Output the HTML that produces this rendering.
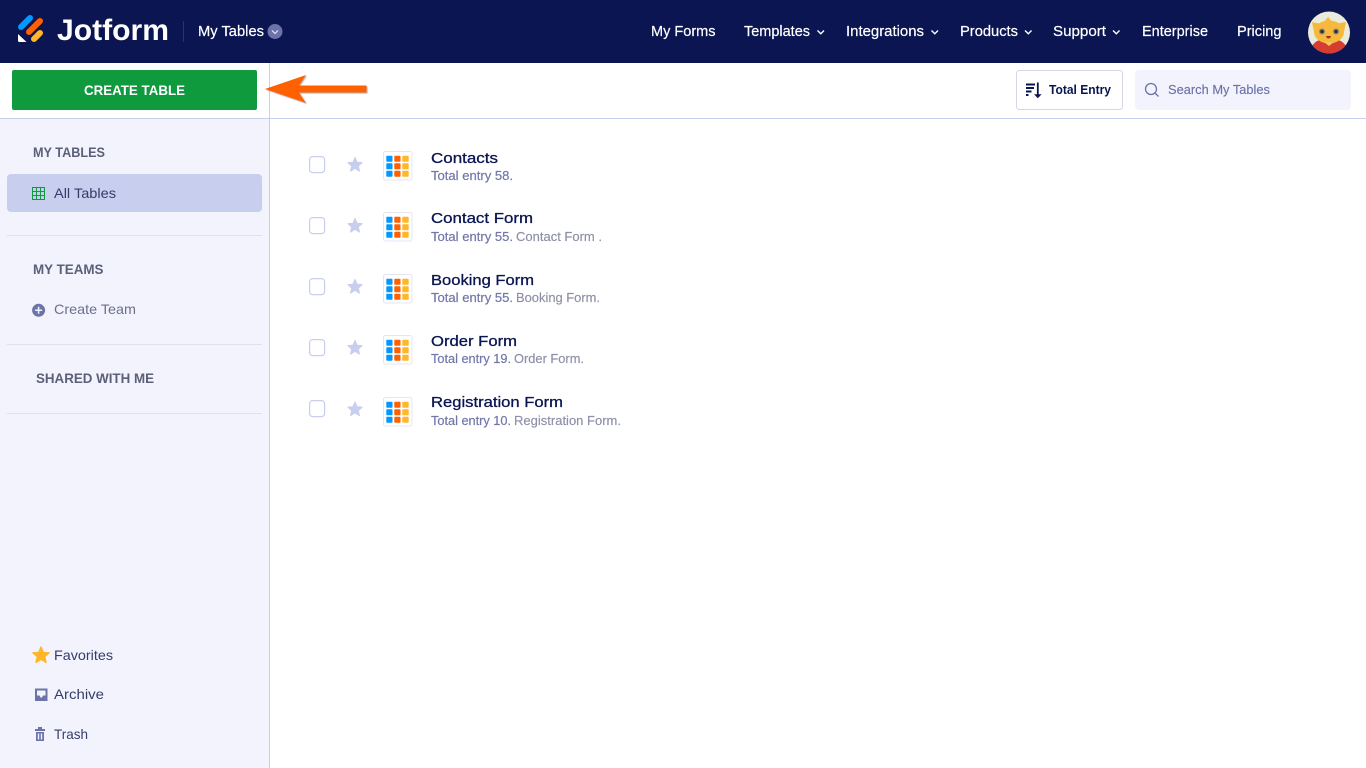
<!DOCTYPE html>
<html lang="en">
<head>
<meta charset="utf-8">
<title>Jotform Tables</title>
<style>
html,body{margin:0;padding:0;width:1366px;height:768px;overflow:hidden;background:#fff}
svg{display:block;position:absolute;left:0;top:0}
text{font-family:"Liberation Sans",sans-serif;white-space:pre}
.nav{fill:#fff;font-size:14.5px;stroke:#fff;stroke-width:.2}
.sec{fill:#5b6078;font-size:14px;font-weight:700}
.side{fill:#343c6a;font-size:14px}
.title{fill:#0a1551;font-size:15px;stroke:#0a1551;stroke-width:.3}
.sub1{fill:#7378aa;font-size:12.5px;stroke:#7378aa;stroke-width:.2}
.sub2{fill:#8d8fa8;font-size:12.5px;stroke:#8d8fa8;stroke-width:.15}
.chev{fill:none;stroke:#fff;stroke-width:1.4}
.cb{fill:#fff;stroke:#c8ceed;stroke-width:1.2}
.div{stroke:#dfe0ec;stroke-width:1}
.s{stroke-width:1.2;stroke-linejoin:round}
</style>
</head>
<body>
<svg width="1366" height="768" viewBox="0 0 1366 768" xmlns="http://www.w3.org/2000/svg">
<defs>
<g id="tbl">
<rect x=".5" y=".5" width="28.5" height="28.5" rx="2" fill="#fff" stroke="#e3e5f5"/>
<g fill="#0099ff"><rect x="3.3" y="4.7" width="6.2" height="6" rx=".8"/><rect x="3.3" y="12.3" width="6.2" height="6" rx=".8"/><rect x="3.3" y="19.7" width="6.2" height="6" rx=".8"/></g>
<g fill="#ff6100"><rect x="11.3" y="4.7" width="6.2" height="6" rx=".8"/><rect x="11.3" y="12.3" width="6.2" height="6" rx=".8"/><rect x="11.3" y="19.7" width="6.2" height="6" rx=".8"/></g>
<g fill="#ffb629"><rect x="19.3" y="4.7" width="6.4" height="6" rx=".8"/><rect x="19.3" y="12.3" width="6.4" height="6" rx=".8"/><rect x="19.3" y="19.7" width="6.4" height="6" rx=".8"/></g>
</g>
<path id="star" d="M0-7.4 2-2.7 7-2.300 3.200 1 4.400 6 0 3.300-4.400 6-3.200 1-7-2.300-2-2.700Z"/>
<filter id="sh" x="-10%" y="-20%" width="120%" height="140%"><feDropShadow dx="1" dy="1" stdDeviation=".6" flood-color="#777" flood-opacity=".6"/></filter>
<clipPath id="av"><circle cx="1329" cy="32.5" r="21"/></clipPath>
</defs>

<!-- sidebar / header backgrounds -->
<rect x="0" y="119" width="269" height="649" fill="#f3f3fe"/>
<rect x="269" y="63" width="1" height="705" fill="#c8ceed"/>
<rect x="0" y="118" width="1366" height="1" fill="#c8ceed"/>
<rect x="0" y="0" width="1366" height="63" fill="#0a1551"/>

<!-- logo -->
<g fill="none" stroke-linecap="round" stroke-width="6">
<path d="M21 27 30 18" stroke="#0099ff"/>
<path d="M29 32 40 21" stroke="#ff6100"/>
<path d="M34 39 40 33" stroke="#ffb629"/>
</g>
<path d="M18 34 26.500 42H19.500Q18 42 18 40.500Z" fill="#fff"/>
<text x="57" y="40" font-size="30" font-weight="700" fill="#fff" textLength="112" lengthAdjust="spacingAndGlyphs">Jotform</text>
<rect x="183" y="21" width="1" height="21" fill="#2a336b"/>
<text class="nav" x="198" y="36" textLength="66" lengthAdjust="spacingAndGlyphs">My Tables</text>
<circle cx="275" cy="31.500" r="7.500" fill="#6c73a8"/>
<path d="M272 30.500 275 33.500 278 30.500" fill="none" stroke="#e3e5f5" stroke-width="1.200"/>

<!-- nav -->
<text class="nav" x="651" y="36" textLength="64.500" lengthAdjust="spacingAndGlyphs">My Forms</text>
<text class="nav" x="744" y="36" textLength="66" lengthAdjust="spacingAndGlyphs">Templates</text>
<path class="chev" d="M817.500 30.500 820.800 33.800 824 30.500"/>
<text class="nav" x="846" y="36" textLength="78" lengthAdjust="spacingAndGlyphs">Integrations</text>
<path class="chev" d="M931.500 30.500 934.800 33.800 938 30.500"/>
<text class="nav" x="960" y="36" textLength="58" lengthAdjust="spacingAndGlyphs">Products</text>
<path class="chev" d="M1025 30.500 1028.300 33.800 1031.500 30.500"/>
<text class="nav" x="1053" y="36" textLength="53" lengthAdjust="spacingAndGlyphs">Support</text>
<path class="chev" d="M1113 30.500 1116.300 33.800 1119.500 30.500"/>
<text class="nav" x="1142" y="36" textLength="66" lengthAdjust="spacingAndGlyphs">Enterprise</text>
<text class="nav" x="1237" y="36" textLength="44.500" lengthAdjust="spacingAndGlyphs">Pricing</text>

<!-- avatar -->
<circle cx="1329" cy="32.500" r="21" fill="#e9ebdd"/>
<g clip-path="url(#av)">
<path d="M1309 56Q1311 42 1320 40H1338Q1347 42 1349 56Z" fill="#d63c30"/>
<path d="M1312 22 1322 24 1328 17 1334 24 1346 22 1344 32H1314Z" fill="#f6b93b"/>
<ellipse cx="1329" cy="32" rx="15" ry="11.500" fill="#f6b93b"/>
<path d="M1324 42 1329 46 1334 42Z" fill="#f7c65a"/>
</g>
<circle cx="1322" cy="31.500" r="3" fill="#8a8578"/><circle cx="1322" cy="31.500" r="1.800" fill="#33303e"/>
<circle cx="1336" cy="31.500" r="3" fill="#8a8578"/><circle cx="1336" cy="31.500" r="1.800" fill="#33303e"/>
<path d="M1326 36H1331Q1330.500 38.500 1328.500 38.500T1326 36Z" fill="#9b3224"/>

<!-- toolbar -->
<rect x="12" y="70" width="245" height="40" rx="2" fill="#0f9a3e"/>
<text x="84" y="95" font-size="14" font-weight="700" fill="#fff" textLength="101" lengthAdjust="spacingAndGlyphs">CREATE TABLE</text>
<path filter="url(#sh)" d="M265 89 306 75 299 85.500H366.500V92.500H299L306 103Z" fill="#ff6100"/>

<rect x="1016.500" y="70.500" width="106" height="39" rx="3" fill="#fff" stroke="#d5d6e8"/>
<g fill="#0a1551">
<rect x="1026" y="83.500" width="9" height="2"/><rect x="1026" y="87" width="8" height="2"/><rect x="1026" y="90.500" width="5.500" height="2"/><rect x="1026" y="94" width="2.500" height="2"/>
</g>
<path d="M1037.800 82.500V95" stroke="#0a1551" stroke-width="1.800" fill="none"/>
<path d="M1034 94.300H1041.600L1037.800 98.300Z" fill="#0a1551"/>
<text x="1049" y="94" font-size="12.500" font-weight="700" fill="#0a1551" textLength="62" lengthAdjust="spacingAndGlyphs">Total Entry</text>

<rect x="1135" y="70" width="216" height="40" rx="4" fill="#f3f3fe"/>
<circle cx="1151" cy="89" r="5.500" fill="none" stroke="#6c73a8" stroke-width="1.300"/>
<path d="M1155 93 1158.500 96.500" stroke="#6c73a8" stroke-width="1.300"/>
<text x="1168" y="94" font-size="13" fill="#6c73a8" stroke="#6c73a8" stroke-width=".15" textLength="102" lengthAdjust="spacingAndGlyphs">Search My Tables</text>

<!-- sidebar -->
<text class="sec" x="33" y="157" textLength="72" lengthAdjust="spacingAndGlyphs">MY TABLES</text>
<rect x="7" y="174" width="255" height="38" rx="4" fill="#c8ceed"/>
<g fill="none" stroke="#0f9a3e" stroke-width="1">
<rect x="32.500" y="187.500" width="12" height="12"/>
<path d="M32.500 191.500H44.500M32.500 195.500H44.500M36.500 187.500V199.500M40.500 187.500V199.500"/>
</g>
<text class="side" x="54" y="198" textLength="62" lengthAdjust="spacingAndGlyphs">All Tables</text>
<path class="div" d="M7 235.500H262"/>
<text class="sec" x="33" y="274" textLength="70.500" lengthAdjust="spacingAndGlyphs">MY TEAMS</text>
<circle cx="38.600" cy="310.300" r="6.500" fill="#6c73a8"/>
<path d="M38.600 306.800V313.800M35.100 310.300H42.100" stroke="#f3f3fe" stroke-width="1.500"/>
<text x="54" y="314" font-size="14" fill="#6c7089" textLength="82" lengthAdjust="spacingAndGlyphs">Create Team</text>
<path class="div" d="M7 344.500H262"/>
<text class="sec" x="36" y="383" textLength="118" lengthAdjust="spacingAndGlyphs">SHARED WITH ME</text>
<path class="div" d="M7 413.500H262"/>

<use href="#star" transform="translate(41 655.500) scale(1.150)" fill="#ffb629" stroke="#ffb629" class="s"/>
<text class="side" x="54" y="660" textLength="59" lengthAdjust="spacingAndGlyphs">Favorites</text>
<path d="M35 688.500H47.500V701H35ZM37 690.500V695.500H39.500L40.500 697.500H42L43 695.500H45.500V690.500Z" fill="#6c73a8" fill-rule="evenodd"/>
<text class="side" x="54" y="699" textLength="50" lengthAdjust="spacingAndGlyphs">Archive</text>
<path d="M35 729H45V731H35ZM38 727H42V729H38ZM36 732H44V741H36ZM37.800 733.500V739.500H39.200V733.500ZM40.800 733.500V739.500H42.200V733.500Z" fill="#6c73a8" fill-rule="evenodd"/>
<text class="side" x="54" y="739" textLength="34" lengthAdjust="spacingAndGlyphs">Trash</text>

<!-- rows -->
<rect class="cb" x="309.600" y="156.600" width="15" height="16" rx="3"/>
<use href="#star" x="355" y="165" fill="#c8ceed" stroke="#c8ceed" class="s"/>
<use href="#tbl" x="383" y="151"/>
<text class="title" x="431" y="163" textLength="67" lengthAdjust="spacingAndGlyphs">Contacts</text>
<text class="sub1" x="431" y="180" textLength="82" lengthAdjust="spacingAndGlyphs">Total entry 58.</text>

<rect class="cb" x="309.600" y="217.600" width="15" height="16" rx="3"/>
<use href="#star" x="355" y="226" fill="#c8ceed" stroke="#c8ceed" class="s"/>
<use href="#tbl" x="383" y="212"/>
<text class="title" x="431" y="223" textLength="102" lengthAdjust="spacingAndGlyphs">Contact Form</text>
<text class="sub1" x="431" y="241" textLength="82" lengthAdjust="spacingAndGlyphs">Total entry 55.</text>
<text class="sub2" x="516" y="241" textLength="86" lengthAdjust="spacingAndGlyphs">Contact Form .</text>

<rect class="cb" x="309.600" y="278.600" width="15" height="16" rx="3"/>
<use href="#star" x="355" y="287" fill="#c8ceed" stroke="#c8ceed" class="s"/>
<use href="#tbl" x="383" y="274"/>
<text class="title" x="431" y="285" textLength="103" lengthAdjust="spacingAndGlyphs">Booking Form</text>
<text class="sub1" x="431" y="302" textLength="82" lengthAdjust="spacingAndGlyphs">Total entry 55.</text>
<text class="sub2" x="516" y="302" textLength="84" lengthAdjust="spacingAndGlyphs">Booking Form.</text>

<rect class="cb" x="309.600" y="339.600" width="15" height="16" rx="3"/>
<use href="#star" x="355" y="348" fill="#c8ceed" stroke="#c8ceed" class="s"/>
<use href="#tbl" x="383" y="335"/>
<text class="title" x="431" y="346" textLength="86" lengthAdjust="spacingAndGlyphs">Order Form</text>
<text class="sub1" x="431" y="363" textLength="80" lengthAdjust="spacingAndGlyphs">Total entry 19.</text>
<text class="sub2" x="514" y="363" textLength="70" lengthAdjust="spacingAndGlyphs">Order Form.</text>

<rect class="cb" x="309.600" y="400.600" width="15" height="16" rx="3"/>
<use href="#star" x="355" y="409.500" fill="#c8ceed" stroke="#c8ceed" class="s"/>
<use href="#tbl" x="383" y="397"/>
<text class="title" x="431" y="407" textLength="132" lengthAdjust="spacingAndGlyphs">Registration Form</text>
<text class="sub1" x="431" y="425" textLength="80" lengthAdjust="spacingAndGlyphs">Total entry 10.</text>
<text class="sub2" x="514" y="425" textLength="107" lengthAdjust="spacingAndGlyphs">Registration Form.</text>
</svg>
</body>
</html>
